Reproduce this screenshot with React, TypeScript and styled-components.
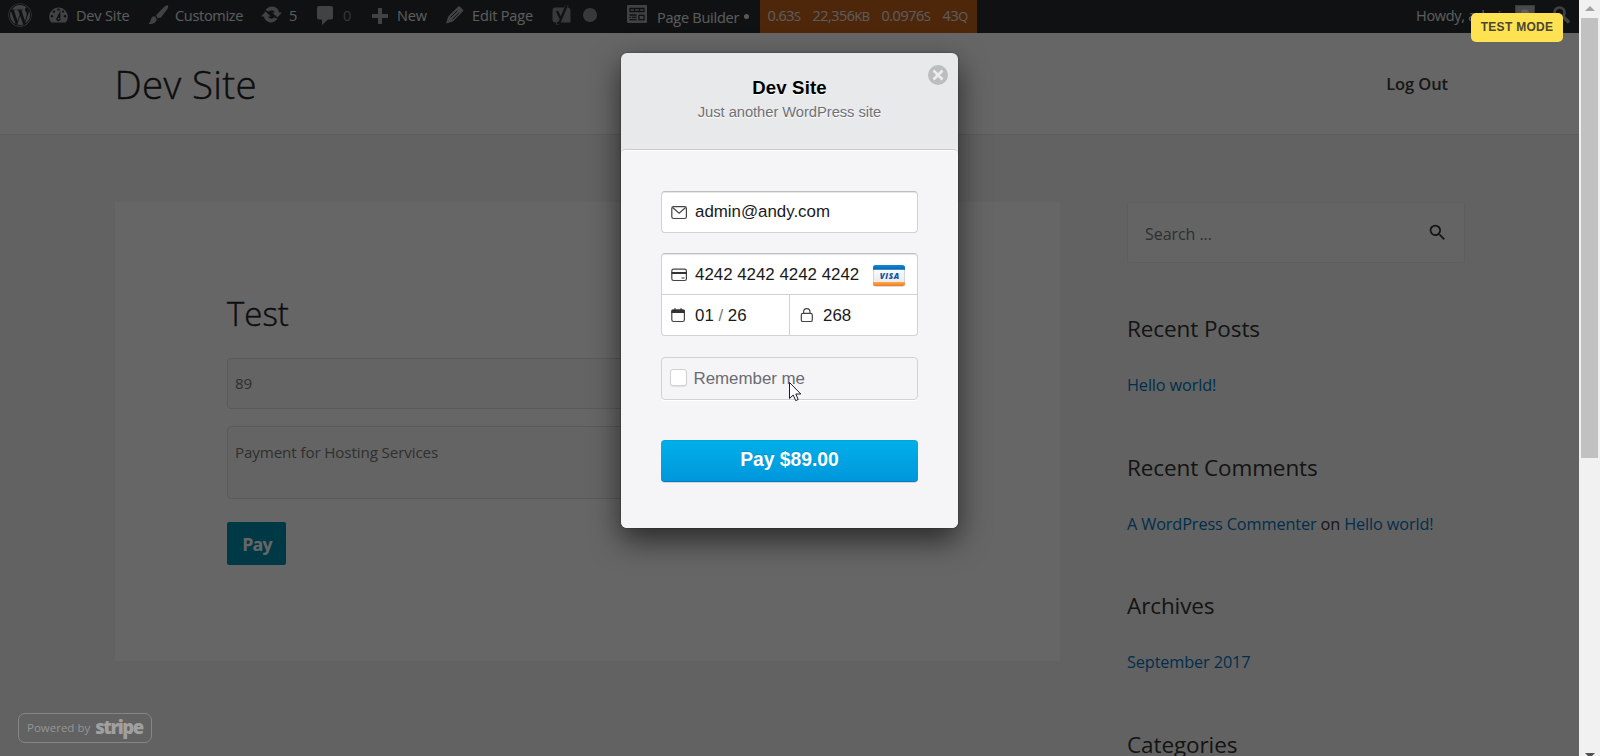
import React from "react";
import styled, { createGlobalStyle } from "styled-components";
import { FaWordpress } from "react-icons/fa";
import { MdSearch } from "react-icons/md";

const GlobalStyle = createGlobalStyle`
  * { box-sizing: border-box; }
  html, body { margin: 0; padding: 0; overflow: hidden; }
  body { font-family: "Open Sans", "Noto Sans", sans-serif; background: #f1f1f1; }
`;

const Window = styled.div`
  display: flex;
  width: 1600px;
  height: 756px;
  overflow: hidden;
`;

const Viewport = styled.div`
  position: relative;
  width: 1579px;
  height: 756px;
  overflow: hidden;
  background: #f5f5f5;
`;

const Label = styled.span<{ $ls?: number }>`
  white-space: pre;
  letter-spacing: ${(p) => p.$ls ?? 0}px;
`;

/* ---------- admin bar ---------- */

const AdminBar = styled.nav`
  display: flex;
  height: 33px;
  background: #282c30;
  color: #eee;
  font-size: 14.5px;
  line-height: 31px;
`;

const BarItem = styled.div<{ $w: number; $dim?: boolean; $drop?: number }>`
  display: flex;
  align-items: flex-start;
  width: ${(p) => p.$w}px;
  height: 33px;
  padding-top: ${(p) => p.$drop ?? 0}px;
  color: ${(p) => (p.$dim ? "#82868a" : "#e6e6e6")};
`;

const BarIcon = styled.span<{ $w: number; $top?: number }>`
  display: block;
  flex: none;
  width: ${(p) => p.$w}px;
  padding-top: ${(p) => p.$top ?? 5}px;
  line-height: 0;
  color: #a0a5aa;
`;

const WordpressMark = styled(FaWordpress)`
  margin-left: 7.5px;
`;

const Stats = styled.div`
  display: flex;
  width: 217px;
  height: 33px;
  padding-left: 7.5px;
  background: #c4621c;
  color: #e6e6e6;
`;

const Stat = styled.span<{ $w: number; $ls: number }>`
  width: ${(p) => p.$w}px;
  white-space: nowrap;
  letter-spacing: ${(p) => p.$ls}px;
  small { font-size: 12.8px; }
`;

const Dot = styled.i`
  width: 5px;
  height: 5px;
  margin: 12px 0 0 5px;
  border-radius: 50%;
  background: #dcdcdc;
`;

const Account = styled.div`
  display: flex;
  margin-left: auto;
  width: 163px;
`;

const Howdy = styled.div`
  width: 99px;
  color: #e6e6e6;
`;

const Avatar = styled.div`
  width: 20px;
  height: 20px;
  margin: 5px 18px 0 0;
  background: #b9b9b9;
  border: 1px solid #8c8f94;
  overflow: hidden;
  svg { display: block; }
`;

/* ---------- page ---------- */

const SiteHeader = styled.header`
  display: flex;
  justify-content: space-between;
  height: 102px;
  padding: 0 131px 0 114.5px;
  background: #fff;
  border-bottom: 1px solid #e6e6e6;
`;

const SiteTitle = styled.div`
  font-size: 38.5px;
  font-weight: 300;
  line-height: 102px;
  color: #222;
  letter-spacing: 0.35px;
  -webkit-text-stroke: 0.4px #222;
`;

const NavLink = styled.a`
  font-size: 16.5px;
  font-weight: 600;
  line-height: 101px;
  color: #3a3a3a;
  letter-spacing: -0.1px;
`;

const Columns = styled.div`
  display: flex;
  align-items: flex-start;
  padding: 67px 0 0 115px;
`;

const Article = styled.main`
  width: 945px;
  height: 459px;
  padding: 87px 112px 0;
  background: #fff;
`;

const ArticleTitle = styled.h1`
  margin: 0;
  font-size: 33px;
  font-weight: 300;
  line-height: 50px;
  color: #222;
  -webkit-text-stroke: 0.4px #222;
`;

const Field = styled.div<{ $h: number; $gap: number; $lh: number }>`
  width: 500px;
  height: ${(p) => p.$h}px;
  margin-top: ${(p) => p.$gap}px;
  padding-left: 7px;
  border: 1px solid #e0e0e0;
  border-radius: 4px;
  background: #fafafa;
  color: #777;
  font-size: 15.2px;
  line-height: ${(p) => p.$lh}px;
`;

const PayLink = styled.button`
  display: block;
  width: 59px;
  height: 43px;
  margin-top: 23px;
  padding: 0 0 0 1px;
  border: 0;
  border-radius: 2px;
  background: #008fae;
  color: #fff;
  font: 700 17.8px/42px "Open Sans", sans-serif;
  letter-spacing: -0.8px;
`;

const Sidebar = styled.aside`
  width: 338px;
  margin-left: 67px;
`;

const SearchBox = styled.div`
  display: flex;
  justify-content: space-between;
  height: 61px;
  padding: 0 16px 0 17px;
  border: 1px solid #eaeaea;
  border-radius: 2px;
  background: #fafafa;
  color: #757575;
  font-size: 16px;
  line-height: 62px;
  svg { margin-top: 19px; color: #333; }
`;

const Widget = styled.section`
  height: 138.7px;
  &:first-of-type { margin-top: 51px; }
`;

const WidgetTitle = styled.h2`
  margin: 0;
  font-size: 22.5px;
  font-weight: 400;
  line-height: 30px;
  letter-spacing: -0.1px;
  color: #333;
`;

const WidgetBody = styled.p`
  margin: 27px 0 0;
  font-size: 16.3px;
  line-height: 29.6px;
  letter-spacing: -0.13px;
  white-space: nowrap;
  color: #3a3a3a;
`;

const Link = styled.a`
  color: #0274be;
`;

/* ---------- checkout overlay ---------- */

const Overlay = styled.div`
  position: absolute;
  inset: 0;
  display: flex;
  justify-content: center;
  align-items: flex-start;
  padding-top: 53px;
  background: rgba(0, 0, 0, 0.6);
`;

const Modal = styled.div`
  position: relative;
  width: 337px;
  height: 475px;
  border-radius: 6px;
  background: #e8e9eb;
  box-shadow: 0 12px 30px rgba(0, 0, 0, 0.6), 0 0 2px rgba(0, 0, 0, 0.4);
  font-family: "Liberation Sans", Arial, sans-serif;
`;

const ModalHeader = styled.div`
  height: 96px;
  padding-top: 23px;
  text-align: center;
  text-shadow: 0 1px 0 #fff;
`;

const ShopName = styled.div`
  font-size: 18.6px;
  font-weight: 700;
  line-height: 23px;
  letter-spacing: 0.15px;
  color: #000;
`;

const ShopTagline = styled.div`
  margin-top: 2px;
  font-size: 14.7px;
  line-height: 22px;
  letter-spacing: -0.03px;
  color: #6f7077;
`;

const CloseButton = styled.button`
  position: absolute;
  top: 11.500px;
  right: 10px;
  width: 20px;
  height: 20px;
  padding: 0;
  border: 0;
  background: none;
  svg { display: block; }
`;

const Form = styled.div`
  height: 379px;
  padding: 41px 40px 0;
  border-top: 1px solid #cbcbcd;
  border-radius: 5px 5px 6px 6px;
  background: #f5f5f7;
  box-shadow: inset 0 1px 0 #fff;
`;

const InputGroup = styled.div<{ $gap?: number }>`
  margin-top: ${(p) => p.$gap ?? 0}px;
  border: 1px solid #d2d2d4;
  border-top-color: #bfbfc1;
  border-radius: 4px;
  background: #fff;
  box-shadow: inset 0 1px 1px rgba(0, 0, 0, 0.1);
`;

const InputRow = styled.div<{ $split?: boolean }>`
  display: flex;
  height: ${(p) => (p.$split ? 41 : 40)}px;
  border-top: ${(p) => (p.$split ? "1px solid #d2d2d4" : "0")};
`;

const Input = styled.div<{ $divider?: boolean; $lh?: number }>`
  display: flex;
  flex: 1;
  padding-left: 9px;
  border-left: ${(p) => (p.$divider ? "1px solid #d2d2d4" : "0")};
  font-size: 16.9px;
  line-height: ${(p) => p.$lh ?? 40}px;
  letter-spacing: -0.01px;
  white-space: pre;
  color: #1a1a1a;
  > svg:first-child { flex: none; margin: 11px 5px 0 0; }
`;

const Slash = styled.span`
  color: #777;
`;

const VisaCard = styled.svg`
  margin: 11px 12px 0 auto;
`;

const Remember = styled.label`
  display: flex;
  height: 43px;
  margin-top: 21px;
  padding-left: 8px;
  border: 1px solid #d2d2d4;
  border-radius: 4px;
  box-shadow: 0 1px 0 #fff;
  font-size: 16.9px;
  line-height: 41px;
  letter-spacing: -0.02px;
  color: #6b6b72;
`;

const CheckBox = styled.span`
  width: 17px;
  height: 17px;
  margin: 11px 6.5px 0 0;
  border: 1px solid #d0d0d2;
  border-radius: 3px;
  background: #fff;
  box-shadow: 0 1px 1px rgba(0, 0, 0, 0.08);
`;

const PayButton = styled.button`
  display: block;
  width: 257px;
  height: 42px;
  margin-top: 40px;
  padding: 0 0 3px;
  border: 0;
  border-radius: 4px;
  background: linear-gradient(#00b0e8, #0096dc);
  box-shadow: inset 0 -1px 0 rgba(0, 60, 130, 0.3), inset 0 1px 0 rgba(0, 90, 150, 0.12), 0 1px 0 rgba(0, 0, 0, 0.12);
  color: #fff;
  font: 700 19.3px/36px "Liberation Sans", Arial, sans-serif;
  text-shadow: 0 -1px 0 rgba(0, 80, 160, 0.3);
`;

const TestBadge = styled.div`
  position: absolute;
  top: 13px;
  right: 16px;
  width: 92px;
  height: 29px;
  border-radius: 5px;
  background: #ffe252;
  color: #4a4630;
  font: 700 12px/28px "Liberation Sans", Arial, sans-serif;
  letter-spacing: 0.3px;
  text-align: center;
  white-space: nowrap;
`;

const PoweredBy = styled.div`
  position: absolute;
  left: 18px;
  bottom: 13px;
  display: flex;
  width: 134px;
  height: 30px;
  padding-left: 8px;
  border: 1px solid #858585;
  border-radius: 7px;
  color: #959595;
  font-size: 11.5px;
  line-height: 28px;
  white-space: nowrap;
`;

const StripeWord = styled.b`
  margin-left: 5px;
  font-size: 18.5px;
  font-weight: 800;
  line-height: 25px;
  letter-spacing: -1.4px;
  color: #a0a0a0;
`;

const Cursor = styled.svg`
  position: absolute;
  left: 788px;
  top: 381px;
`;

/* ---------- scrollbar ---------- */

const ScrollTrack = styled.div`
  display: flex;
  flex-direction: column;
  align-items: center;
  width: 21px;
  height: 756px;
  padding-top: 6px;
  background: #f1f1f1;
`;

const Arrow = styled.svg`
  display: block;
  flex: none;
`;

const Thumb = styled.div`
  flex: none;
  width: 17px;
  height: 440px;
  margin: 7px 0 295px;
  background: #c1c1c1;
`;

/* ---------- icons ---------- */

const BAR = "#282c30";

const DashboardIcon = () => (
  <svg width="19" height="17" viewBox="0 0 19 17">
    <path d="M2.200 16.600A9.300 9.300 0 1 1 16.800 16.600Z" fill="currentColor" />
    <g fill={BAR}>
      <circle cx="9.500" cy="3.600" r="1.200" />
      <circle cx="4.900" cy="5.600" r="1.200" />
      <circle cx="14.100" cy="5.600" r="1.100" />
      <circle cx="3" cy="10.200" r="1.200" />
      <circle cx="16" cy="10.200" r="1.200" />
      <path d="M11.300 4.800 L11.500 12.500 A2.200 2.200 0 1 1 8 11.200Z" />
    </g>
    <circle cx="9.600" cy="12.600" r="0.900" fill="currentColor" />
  </svg>
);

const BrushIcon = () => (
  <svg width="21" height="20" viewBox="0 0 21 20">
    <path d="M19.600.3c1 .7.7 2.200-.2 3.700L13 12.600 9.400 13.200 8.200 9.900 15 3C16.600 1.300 18.500-.4 19.600.3z" fill="currentColor" />
    <path d="M7 11.300 8.700 14.300C8.400 17.300 5 19.600.3 19 2.600 17.500 2.300 15.500 3.300 13.300 4 11.800 5.600 11 7 11.300z" fill="currentColor" />
  </svg>
);

const UpdateIcon = () => (
  <svg width="21" height="17" viewBox="0 0 21 17" fill="currentColor">
    <path d="M4.600 4.200C7.400-.4 14.400-.9 17.400 4.200L18 6.500H21L16.400 11.600 11.300 6.500H13.900C12.800 3.900 9.800 3.600 7.900 5.600z" />
    <path d="M16.400 12.800C13.600 17.400 6.600 17.900 3.600 12.800L3 10.500H0L4.600 5.400 9.700 10.500H7.100C8.200 13.100 11.200 13.400 13.100 11.400z" />
  </svg>
);

const CommentIcon = () => (
  <svg width="16" height="19" viewBox="0 0 16 19">
    <path d="M2 0H14Q16 0 16 2V11.500Q16 13.500 14 13.500H11L5 19V13.500H2Q0 13.500 0 11.500V2Q0 0 2 0z" fill="currentColor" />
  </svg>
);

const PlusIcon = () => (
  <svg width="16" height="16" viewBox="0 0 16 16">
    <path d="M6 0H10V6H16V10H10V16H6V10H0V6H6z" fill="currentColor" />
  </svg>
);

const PencilIcon = () => (
  <svg width="18" height="18" viewBox="0 0 18 18">
    <path d="M12 .8Q13-.2 14 .8L16.800 3.600Q17.600 4.500 16.800 5.400L6.800 15.400 0 17.600 2.200 10.600z" fill="currentColor" />
    <path d="M4.600 11.400 11.300 4.700M6.400 13.400 13.100 6.700" stroke={BAR} strokeWidth="1" />
  </svg>
);

const YoastIcon = () => (
  <svg width="20" height="22" viewBox="0 0 20 22">
    <path d="M3.500 3.500H12L13.300 1H16.500L15.500 3.500Q18.500 3.600 18.500 7V18.500H8.500L7 20.800H4V18.500H3Q.5 18.500.5 15.500V6.500Q.5 3.500 3.500 3.500z" fill="#8c9095" />
    <path d="M5 7 8.600 14.500M14.800 1 8 17.300Q7.300 19.300 4.800 19.400" stroke={BAR} strokeWidth="2.300" fill="none" />
  </svg>
);

const BuilderIcon = () => (
  <svg width="20" height="18" viewBox="0 0 20 18">
    <rect width="20" height="18" rx="1" fill="currentColor" />
    <g stroke={BAR} fill="none" strokeWidth="1.300">
      <path d="M3 3.500H17V6.500H3zM7.500 3.500V6.500M12.500 3.500V6.500" />
      <path d="M2.500 10H9.500M2.500 12.300H4M5 12.300H9.500M2.500 14.600H9.500" />
      <rect x="12" y="10.300" width="5" height="4.400" />
    </g>
  </svg>
);

const AdminSearchIcon = () => (
  <svg width="18" height="18" viewBox="0 0 18 18" fill="none" stroke="currentColor">
    <circle cx="6.500" cy="6.500" r="5" strokeWidth="2.600" />
    <path d="M10 10.500 16 16.500" strokeWidth="3.400" />
  </svg>
);

const MailIcon = () => (
  <svg width="19" height="18" viewBox="0 0 19 18" fill="none" stroke="#444" strokeWidth="1.200">
    <rect x="0.800" y="3.700" width="14.600" height="11.800" rx="1.800" />
    <path d="M1.600 4.500 8.100 10.200 14.600 4.500" />
  </svg>
);

const CardIcon = () => (
  <svg width="19" height="18" viewBox="0 0 19 18">
    <rect x="0.800" y="4.200" width="14.600" height="11.300" rx="1.800" fill="none" stroke="#444" strokeWidth="1.200" />
    <path d="M.6 8H15.600" stroke="#333" strokeWidth="2" />
    <path d="M10.500 13H13.500" stroke="#333" />
  </svg>
);

const CalendarIcon = () => (
  <svg width="19" height="18" viewBox="0 0 19 18">
    <rect x="0.800" y="4.200" width="12.600" height="11.300" rx="1.800" fill="none" stroke="#444" strokeWidth="1.200" />
    <path d="M.3 6.900V5Q.3 3.600 1.800 3.600H12.400Q13.900 3.600 13.900 5V6.900z" fill="#333" />
    <path d="M4 2.300V5M10 2.300V5" stroke="#333" strokeWidth="1.300" />
  </svg>
);

const LockIcon = () => (
  <svg width="19" height="18" viewBox="0 0 19 18" fill="none" stroke="#444" strokeWidth="1.200">
    <rect x="2.300" y="7.300" width="11" height="8.200" rx="1.600" />
    <path d="M4.600 7.300V6Q4.600 2.700 7.800 2.700T11 6V7.300" />
  </svg>
);

const Visa = () => (
  <VisaCard width="32" height="22" viewBox="0 0 32 22">
    <defs>
      <linearGradient id="visaBody" x1="0" y1="0" x2="0" y2="1">
        <stop offset="0" stopColor="#fff" />
        <stop offset="1" stopColor="#e4e6ea" />
      </linearGradient>
      <linearGradient id="visaTop" x1="0" y1="0" x2="0" y2="1">
        <stop offset="0" stopColor="#1089d2" />
        <stop offset="1" stopColor="#0566b4" />
      </linearGradient>
      <linearGradient id="visaFoot" x1="0" y1="0" x2="0" y2="1">
        <stop offset="0" stopColor="#ffa94a" />
        <stop offset="1" stopColor="#ee7a1c" />
      </linearGradient>
    </defs>
    <rect y="1" width="32" height="20.600" rx="2.500" fill="#c9c9cb" />
    <rect x="0.500" y="1" width="31" height="20" rx="2.500" fill="url(#visaBody)" stroke="#d5d6d9" />
    <path d="M0 4.800V2.500Q0 0 2.500 0H29.500Q32 0 32 2.500V4.800z" fill="url(#visaTop)" />
    <path d="M0 17V18.800Q0 21 2.300 21H29.700Q32 21 32 18.800V17z" fill="url(#visaFoot)" />
    <text x="16.700" y="13.600" textAnchor="middle" fontFamily="Open Sans, sans-serif" fontSize="8" fontWeight="800" fontStyle="italic" letterSpacing="0.600" fill="#10559b">VISA</text>
  </VisaCard>
);

const stats: [string, string, number, number][] = [
  ["0.63", "S", 45, -0.55],
  ["22,356", "KB", 69, -0.55],
  ["0.0976", "S", 61, -0.5],
  ["43", "Q", 30, -0.4],
];

export default function App() {
  return (
    <Window>
      <GlobalStyle />
      <Viewport>
        <AdminBar>
          <BarItem $w={49}>
            <BarIcon $w={31} $top={3}><WordpressMark size={24} /></BarIcon>
          </BarItem>
          <BarItem $w={99}>
            <BarIcon $w={27} $top={6}><DashboardIcon /></BarIcon>
            <Label $ls={-0.15}>Dev Site</Label>
          </BarItem>
          <BarItem $w={113}>
            <BarIcon $w={27}><BrushIcon /></BarIcon>
            <Label $ls={-0.3}>Customize</Label>
          </BarItem>
          <BarItem $w={56}>
            <BarIcon $w={28} $top={6}><UpdateIcon /></BarIcon>
            <Label>5</Label>
          </BarItem>
          <BarItem $w={55} $dim>
            <BarIcon $w={26} $top={6}><CommentIcon /></BarIcon>
            <Label>0</Label>
          </BarItem>
          <BarItem $w={74}>
            <BarIcon $w={25} $top={8}><PlusIcon /></BarIcon>
            <Label $ls={-0.1}>New</Label>
          </BarItem>
          <BarItem $w={106}>
            <BarIcon $w={26} $top={6}><PencilIcon /></BarIcon>
            <Label $ls={-0.15}>Edit Page</Label>
          </BarItem>
          <BarItem $w={75}>
            <BarIcon $w={31} $top={4}><YoastIcon /></BarIcon>
            <BarIcon $w={14} $top={8}>
              <svg width="14" height="14"><circle cx="7" cy="7" r="7" fill="#8c9095" /></svg>
            </BarIcon>
          </BarItem>
          <BarItem $w={133} $drop={2}>
            <BarIcon $w={30} $top={3}><BuilderIcon /></BarIcon>
            <Label $ls={-0.25}>Page Builder</Label>
            <Dot />
          </BarItem>
          <Stats>
            {stats.map(([value, unit, w, ls]) => (
              <Stat key={value} $w={w} $ls={ls}>{value}<small>{unit}</small></Stat>
            ))}
          </Stats>
          <Account>
            <Howdy><Label $ls={-0.3}>Howdy, admin</Label></Howdy>
            <Avatar>
              <svg width="18" height="18"><circle cx="9" cy="7.500" r="4" fill="#eee" /><circle cx="9" cy="18" r="7" fill="#eee" /></svg>
            </Avatar>
            <BarIcon $w={18} $top={6}><AdminSearchIcon /></BarIcon>
          </Account>
        </AdminBar>

        <SiteHeader>
          <SiteTitle>Dev Site</SiteTitle>
          <NavLink>Log Out</NavLink>
        </SiteHeader>

        <Columns>
          <Article>
            <ArticleTitle>Test</ArticleTitle>
            <Field $h={51} $gap={19} $lh={48}><Label $ls={-0.3}>89</Label></Field>
            <Field $h={73} $gap={17} $lh={50}><Label $ls={-0.13}>Payment for Hosting Services</Label></Field>
            <PayLink>Pay</PayLink>
          </Article>
          <Sidebar>
            <SearchBox>
              <Label $ls={-0.05}>Search ...</Label>
              <MdSearch size={21} />
            </SearchBox>
            <Widget>
              <WidgetTitle>Recent Posts</WidgetTitle>
              <WidgetBody><Link>Hello world!</Link></WidgetBody>
            </Widget>
            <Widget>
              <WidgetTitle>Recent Comments</WidgetTitle>
              <WidgetBody><Link>A WordPress Commenter</Link> on <Link>Hello world!</Link></WidgetBody>
            </Widget>
            <Widget>
              <WidgetTitle>Archives</WidgetTitle>
              <WidgetBody><Link>September 2017</Link></WidgetBody>
            </Widget>
            <Widget>
              <WidgetTitle>Categories</WidgetTitle>
            </Widget>
          </Sidebar>
        </Columns>

        <Overlay>
          <Modal>
            <CloseButton aria-label="Close">
              <svg width="20" height="20" viewBox="0 0 20 20">
                <circle cx="10" cy="10" r="10" fill="#bcbdbf" />
                <path d="M5.500 5.500 14.500 14.500M14.500 5.500 5.500 14.500" stroke="#ececee" strokeWidth="2.600" />
              </svg>
            </CloseButton>
            <ModalHeader>
              <ShopName>Dev Site</ShopName>
              <ShopTagline>Just another WordPress site</ShopTagline>
            </ModalHeader>
            <Form>
              <InputGroup>
                <InputRow><Input><MailIcon />admin@andy.com</Input></InputRow>
              </InputGroup>
              <InputGroup $gap={20}>
                <InputRow><Input $lh={42}><CardIcon />4242 4242 4242 4242<Visa /></Input></InputRow>
                <InputRow $split>
                  <Input $lh={42}><CalendarIcon />01 <Slash>/</Slash> 26</Input>
                  <Input $divider $lh={42}><LockIcon />268</Input>
                </InputRow>
              </InputGroup>
              <Remember><CheckBox />Remember me</Remember>
              <PayButton>Pay $89.00</PayButton>
            </Form>
          </Modal>
          <TestBadge>TEST MODE</TestBadge>
          <PoweredBy>Powered by<StripeWord>stripe</StripeWord></PoweredBy>
        </Overlay>
        <Cursor width="14" height="21" viewBox="0 0 14 21">
          <path d="M1.500 1.500V17.500L5.200 14 7.700 19.600 10.200 18.500 7.800 13H12.800z" fill="#fff" stroke="#1a1a2a" />
        </Cursor>
      </Viewport>
      <ScrollTrack>
        <Arrow width="10" height="5"><path d="M0 5 5 0 10 5z" fill="#a3a3a3" /></Arrow>
        <Thumb />
        <Arrow width="10" height="5"><path d="M0 0H10L5 5z" fill="#505050" /></Arrow>
      </ScrollTrack>
    </Window>
  );
}
